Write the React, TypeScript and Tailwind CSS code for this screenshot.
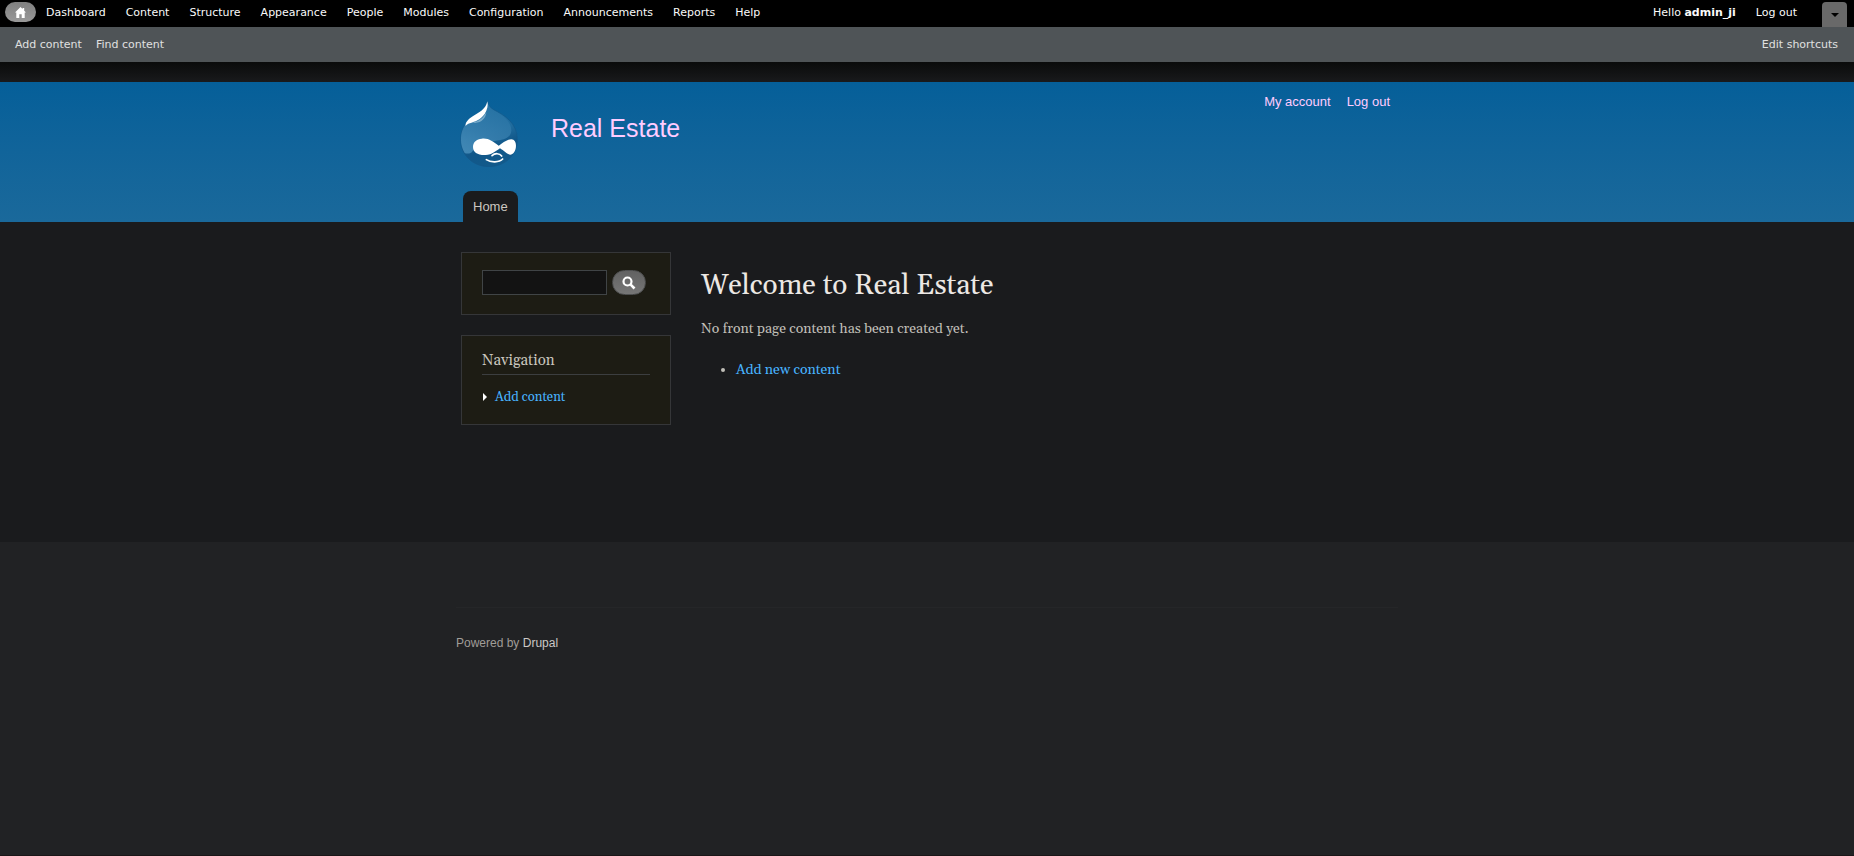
const menuItems = [
  'Dashboard',
  'Content',
  'Structure',
  'Appearance',
  'People',
  'Modules',
  'Configuration',
  'Announcements',
  'Reports',
  'Help',
];

function AdminToolbar() {
  return (
    <div className="font-['DejaVu_Sans',sans-serif] text-[11px] leading-4">
      <div className="flex h-[27px] items-start justify-between bg-black pl-[5px] pr-[7px] text-[#fafafa]">
        <nav aria-label="Administration" className="flex items-start">
          <a
            href="#"
            aria-label="Home"
            className="mt-[2px] flex h-5 w-[31px] items-center justify-center rounded-full bg-linear-to-b from-[#808080] to-[#999]"
          >
            <svg viewBox="0 0 11 11" className="h-[11px] w-[11px]" fill="#fff" aria-hidden="true">
              <path d="M5.5 0 0 5.6h1.3V11h3V7.3h2.4V11h3V5.6H11L9.2 3.8V1H7.6v1.1z" />
            </svg>
          </a>
          <ul className="flex">
            {menuItems.map((item) => (
              <li key={item}>
                <a href="#" className="block px-[10px] pt-[5px]">
                  {item}
                </a>
              </li>
            ))}
          </ul>
        </nav>
        <div className="flex">
          <a href="#" className="px-[10px] pt-[5px]">
            Hello <strong>admin_ji</strong>
          </a>
          <a href="#" className="px-[10px] pt-[5px]">
            Log out
          </a>
          <button
            type="button"
            aria-label="Hide shortcuts"
            className="ml-[15px] mt-[2px] flex h-[25px] w-[25px] items-center justify-center rounded-t bg-[#696969]"
          >
            <svg viewBox="0 0 8 4" className="h-1 w-2" aria-hidden="true">
              <path d="M0 0h8L4 4z" fill="#000" />
            </svg>
          </button>
        </div>
      </div>
      <div className="flex h-[35px] items-center justify-between bg-[#4f5457] pl-[15px] pr-4 text-[#e0e0e0]">
        <div className="flex gap-[14px]">
          <a href="#">Add content</a>
          <a href="#">Find content</a>
        </div>
        <a href="#">Edit shortcuts</a>
      </div>
    </div>
  );
}

function Logo() {
  return (
    <svg viewBox="14 9 174 198" className="h-[66px] w-[58px]" role="img" aria-label="Drupal">
      <defs>
        <linearGradient id="drop" x1="0.3" y1="0" x2="0.6" y2="1">
          <stop offset="0.1" stopColor="#2a78a9" />
          <stop offset="0.5" stopColor="#1f6c9e" />
          <stop offset="0.72" stopColor="#115789" />
          <stop offset="1" stopColor="#125a8b" />
        </linearGradient>
        <linearGradient id="side" x1="0.6" y1="0" x2="0.3" y2="1">
          <stop offset="0.1" stopColor="#2873a4" />
          <stop offset="0.6" stopColor="#3980af" />
          <stop offset="1" stopColor="#4a90bc" />
        </linearGradient>
      </defs>
      <path
        d="M96 11c4 12 9 19 20 25 30 15 70 38 70 89 0 46-37 81-85 81s-85-35-85-81c0-28 12-50 35-66 22-15 38-22 45-48z"
        fill="url(#drop)"
        stroke="#14588a"
        strokeWidth="2"
      />
      <path
        d="M17 120c1-26 13-45 34-60 22-14 40-20 46-43 5 10 12 16 20 21 28 15 51 33 51 60-2 24-27 28-50 31-34 4-53 10-66 30-5 9-17 9-24 6-8-13-12-29-11-45z"
        fill="url(#side)"
        opacity=".8"
      />
      <path
        d="M96 10c3 12 0 25-8 38-13 18-30 23-42 27-8 2-12 5-15 9-2-10 7-20 19-28 19-12 41-20 46-46z"
        fill="#fff"
      />
      <path d="M52 74c19-4 32-14 41-31-1 18-18 36-41 31z" fill="#a9cbdf" opacity=".6" />
      <path
        d="M79 122c19-3 34 8 51 21 10-7 24-19 38-19 18 0 17 31 6 42-12 12-25-6-40-15-14 9-23 19-43 20-24 1-38-8-38-24 0-15 11-24 26-25z"
        fill="#fff"
      />
      <path
        d="M110 173c8-8 23-8 29 1M93 185c13 9 39 9 49-2"
        fill="none"
        stroke="#fff"
        strokeWidth="5"
        strokeLinecap="round"
      />
    </svg>
  );
}

function Header() {
  return (
    <header className="bg-linear-to-b from-[#055f99] to-[#1a699b]">
      <div className="mx-auto flex h-[140px] w-full max-w-[960px] flex-col justify-between">
        <div className="flex items-start justify-between pl-[13px] pr-[17px]">
          <div className="flex items-start gap-[33px] pt-[19px]">
            <a href="#">
              <Logo />
            </a>
            <a href="#" className="pt-[11px] text-[25px] leading-8 text-[#fcf]">
              Real Estate
            </a>
          </div>
          <nav aria-label="User" className="flex gap-4 pt-[10px] text-[13px] leading-5 text-[#fcf]">
            <a href="#">My account</a>
            <a href="#">Log out</a>
          </nav>
        </div>
        <nav aria-label="Main" className="flex pl-4">
          <a href="#" className="h-[31px] rounded-t-[8px] bg-[#1a1b1d] px-[10px] py-[6px] text-[13px] leading-5 text-[#ccc7c0]">
            Home
          </a>
        </nav>
      </div>
    </header>
  );
}

function Sidebar() {
  return (
    <aside className="flex w-[210px] flex-col gap-5">
      <form className="flex gap-[5px] border border-[#353638] bg-[#1d1c14] px-5 pb-[19px] pt-[17px]" role="search">
        <input
          type="text"
          aria-label="Search"
          className="h-[25px] w-[125px] border border-[#404446] bg-[#131313] px-1 text-[13px] text-[#c0bfb8] outline-none"
        />
        <button
          type="button"
          aria-label="Search"
          className="flex h-[25px] w-[34px] items-center justify-center rounded-full border border-[#4e4f50] bg-linear-to-b from-[#626262] to-[#767676]"
        >
          <svg viewBox="0 0 14 14" className="h-[14px] w-[14px]" fill="none" stroke="#fff" aria-hidden="true">
            <circle cx="5.5" cy="5.5" r="4" strokeWidth="2.2" />
            <path d="m8.7 8.7 3.8 3.8" strokeWidth="2.6" />
          </svg>
        </button>
      </form>
      <section className="border border-[#353638] bg-[#1d1c14] px-5 pb-[17px] pt-[15px]">
        <h2 className="border-b border-[#3c3e40] pb-[3px] text-[15px] leading-5 text-[#c8c5bd]">Navigation</h2>
        <ul className="pt-3">
          <li className="flex items-center gap-2">
            <svg viewBox="0 0 4 8" className="ml-px h-2 w-1" aria-hidden="true">
              <path d="M0 0l4 4-4 4z" fill="#fff" />
            </svg>
            <a href="#" className="text-[13px] leading-5 text-[#48b3ff]">
              Add content
            </a>
          </li>
        </ul>
      </section>
    </aside>
  );
}

export default function App() {
  return (
    <div className="flex min-h-screen flex-col bg-[#1a1b1d] font-['Liberation_Sans',Arial,sans-serif]">
      <AdminToolbar />
      <div className="h-5 bg-linear-to-b from-[#0a0b0b] to-[#191a1c]" />
      <Header />
      <div className="mx-auto flex min-h-[320px] w-full max-w-[960px] items-start gap-[30px] px-[14px] pt-[30px] font-[Georgia,Gelasio,'Liberation_Serif',serif]">
        <Sidebar />
        <main className="pt-[18px] text-[#c0bfb8]">
          <h1 className="text-[28px] leading-8 text-[#ece8e4]">Welcome to Real Estate</h1>
          <p className="pt-[17px] text-[14px] leading-5">No front page content has been created yet.</p>
          <ul className="list-disc pl-[35px] pt-[21px] text-[14px] leading-5">
            <li>
              <a href="#" className="text-[#48b3ff]">
                Add new content
              </a>
            </li>
          </ul>
        </main>
      </div>
      <footer className="grow border-b border-[#1b1618] bg-[#212224]">
        <div className="mx-auto w-full max-w-[960px] px-[9px] pt-[65px]">
          <p className="border-t border-[#252628] pt-[25px] text-[12px] leading-5 text-[#a09d98]">
            Powered by{' '}
            <a href="#" className="text-[#ccc9c6]">
              Drupal
            </a>
          </p>
        </div>
      </footer>
    </div>
  );
}
